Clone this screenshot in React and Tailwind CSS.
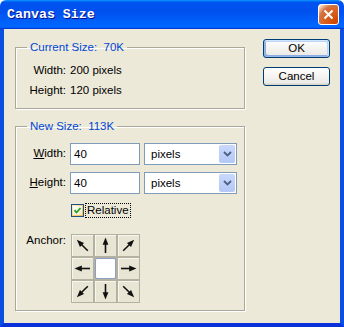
import { Fragment } from 'react'

const font = "font-['Liberation_Sans',Arial,sans-serif] text-[11.5px]"

function Arrow({ rotate }) {
  return (
    <svg width="21" height="21" viewBox="0 0 21 21">
      <g transform={`rotate(${rotate} 10.5 10.5)`}>
        <line x1="10.5" y1="18" x2="10.5" y2="8" stroke="#111" strokeWidth="1.6" />
        <polygon points="10.5,2.5 7.6,9.8 13.4,9.8" fill="#111" />
      </g>
    </svg>
  )
}

function XpButton({ children, isDefault }) {
  return (
    <button
      className={`h-[19px] w-[67px] rounded-[3px] border border-[#003C74] bg-[linear-gradient(180deg,#fff,#ECEBE6_86%,#D6D0C5)] text-black leading-none ${
        isDefault ? 'shadow-[inset_-1px_1px_#CEE7FF,inset_1px_-1px_#98B8EA,inset_-2px_2px_#BCD4F6,inset_2px_-2px_#89ADE4]' : ''
      }`}
    >
      {children}
    </button>
  )
}

function Select() {
  return (
    <div className="flex h-[22px] w-[93px] items-stretch border border-[#7F9DB9] bg-white p-px">
      <span className="flex-1 pl-[5px] leading-[18px]">pixels</span>
      <span className="flex w-[16px] items-center justify-center rounded-[2px] bg-[linear-gradient(180deg,#C9D8FC,#B4C8F6)]">
        <svg width="9" height="6" viewBox="0 0 9 6">
          <polyline points="1,1 4.5,4.5 8,1" fill="none" stroke="#4D6185" strokeWidth="1.8" />
        </svg>
      </span>
    </div>
  )
}

const anchors = [-45, 0, 45, -90, null, 90, -135, 180, 135]

export default function App() {
  return (
    <div className={`flex h-[327px] w-[344px] flex-col ${font} text-black`}>
      <div className="flex h-[29px] items-center justify-between rounded-t-[6px] bg-[linear-gradient(180deg,#0997FF,#0053EE_8%,#0050EE_40%,#0066FF_88%,#0066FF_93%,#005BFF_95%,#003DD7_96%,#003DD7)] pl-[7px] pr-[5px]">
        <span className="font-['Liberation_Mono',monospace] text-[13.3px] font-bold text-white [text-shadow:1px_1px_#0F1089]">
          Canvas Size
        </span>
        <span className="flex h-[21px] w-[21px] items-center justify-center rounded-[3px] border border-white bg-[radial-gradient(circle_at_90%_90%,#CC4600_0,#DC6527_55%,#CD7546_70%,#FFCCB2_90%,#fff_100%)]">
          <svg width="11" height="11" viewBox="0 0 11 11">
            <path d="M1.5 1.5 L9.5 9.5 M9.5 1.5 L1.5 9.5" stroke="#fff" strokeWidth="2" />
          </svg>
        </span>
      </div>

      <div className="flex flex-1 border-x-4 border-b-4 border-x-[#0B4FE0] border-b-[#0831D9] bg-[#ECE9D8] pl-[11px] pr-[10px]">
        <div className="flex w-[231px] flex-col pt-[11px]">
          <fieldset className="h-[69px] border border-[#ACA899] shadow-[inset_1px_1px_0_#fff,1px_1px_0_#fff]">
            <legend className="ml-[11px] px-[3px] leading-[14px] text-[#0046D5]">Current Size:&nbsp;&nbsp;70K</legend>
            <div className="grid grid-cols-[50px_auto] gap-x-[4px] pt-[6px]">
              <span className="text-right leading-[20px]">Width:</span>
              <span className="leading-[20px]">200 pixels</span>
              <span className="text-right leading-[20px]">Height:</span>
              <span className="leading-[20px]">120 pixels</span>
            </div>
          </fieldset>

          <fieldset className="mt-[10px] h-[192px] border border-[#ACA899] shadow-[inset_1px_1px_0_#fff,1px_1px_0_#fff]">
            <legend className="ml-[11px] px-[3px] leading-[14px] text-[#0046D5]">New Size:&nbsp;&nbsp;113K</legend>
            <div className="grid grid-cols-[50px_auto] items-center gap-x-[4px] pt-[10px]">
              {[
                ['W', 'idth:'],
                ['H', 'eight:'],
              ].map(([u, rest], i) => (
                <Fragment key={u}>
                  <span className={`text-right ${i ? 'mt-[7px]' : ''}`}>
                    <span className="underline">{u}</span>
                    {rest}
                  </span>
                  <div className={`flex gap-[4px] ${i ? 'mt-[7px]' : ''}`}>
                    <div className="h-[22px] w-[70px] border border-[#7F9DB9] bg-white pl-[3px] leading-[20px]">40</div>
                    <Select />
                  </div>
                </Fragment>
              ))}

              <span />
              <div className="mt-[9px] flex items-center gap-[1px] pl-[1px]">
                <span className="flex h-[13px] w-[13px] items-center justify-center border border-[#1C5180] bg-[linear-gradient(135deg,#FFF0CF,#F8B636)]">
                  <span className="flex h-[9px] w-[9px] items-center justify-center bg-[linear-gradient(135deg,#fff,#F5E9C4)]">
                    <svg width="9" height="9" viewBox="0 0 9 9">
                      <polyline points="1.5,4.2 3.5,6.5 7.5,2" fill="none" stroke="#21A121" strokeWidth="1.8" />
                    </svg>
                  </span>
                </span>
                <span className="border border-dotted border-black px-[1px] leading-[13px]">Relative</span>
              </div>

              <span className="mt-[15px] self-start text-right leading-[14px]">Anchor:</span>
              <div className="mt-[16px] ml-[1px] grid w-[69px] grid-cols-3 gap-[2px] border border-[#B4B1A1] bg-[#B4B1A1]">
                {anchors.map((r, i) =>
                  r === null ? (
                    <div key={i} className="h-[21px] w-[21px] rounded-[2px] border border-[#8CA0C4] bg-white" />
                  ) : (
                    <div key={i} className="h-[21px] w-[21px] bg-[#E8E5D5] shadow-[inset_1px_1px_#F7F6EF]">
                      <Arrow rotate={r} />
                    </div>
                  )
                )}
              </div>
            </div>
          </fieldset>
        </div>

        <div className="ml-[18px] flex flex-col gap-[9px] pt-[10px]">
          <XpButton isDefault>OK</XpButton>
          <XpButton>Cancel</XpButton>
        </div>
      </div>
    </div>
  )
}
